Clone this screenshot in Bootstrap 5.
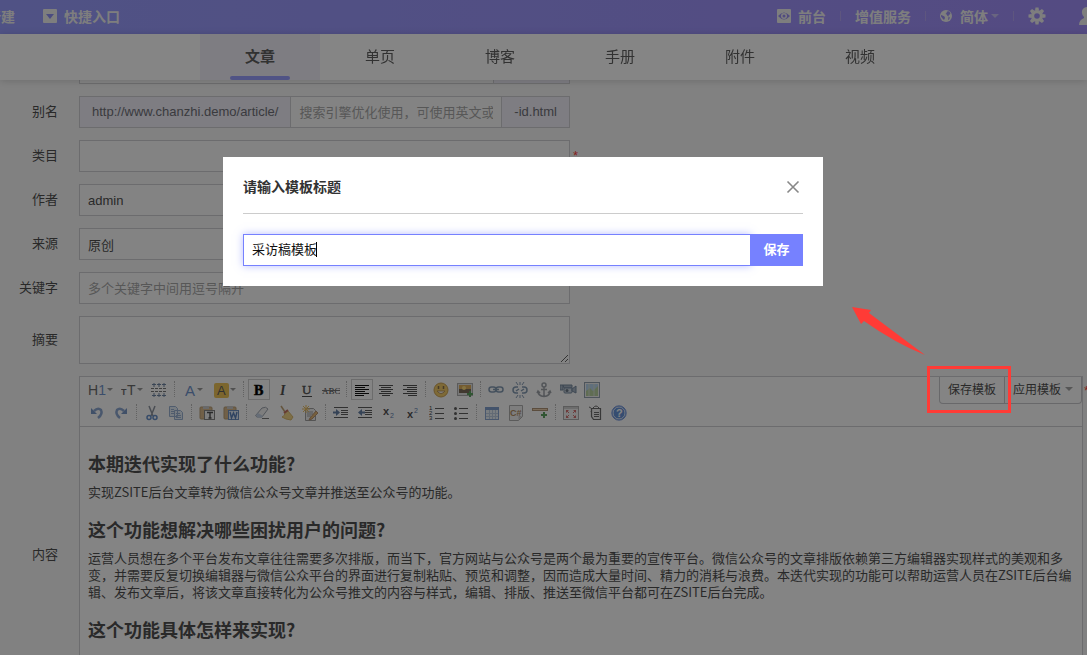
<!DOCTYPE html>
<html lang="zh-CN">
<head>
<meta charset="utf-8">
<meta name="viewport" content="width=device-width, initial-scale=1">
<title>文章</title>
<link href="https://cdn.jsdelivr.net/npm/bootstrap@5.3.0/dist/css/bootstrap.min.css" rel="stylesheet">
<style>
:root{--accent:#7681ff;--line:#d0d0d4}
body{font-family:"Liberation Sans","Noto Sans CJK SC",sans-serif;font-size:13px;line-height:20px;color:#505050;background:#f8f8f8;overflow:hidden}
a{color:inherit;text-decoration:none}
.topbar{height:34px;background:linear-gradient(90deg,#999eff,#a290fa);font:bold 14px/30px "Noto Sans CJK SC",sans-serif;color:#f2f2f2;white-space:nowrap;overflow:hidden;padding-bottom:3px}
.topbar .first-link{margin-left:-13px;margin-right:28px}
.topbar .rule{width:1px;height:10px;background:#b4a6f4;margin:0 14px}
.topbar .gap-icon{margin-right:7px}
.topbar .account{margin-right:-8px;margin-left:33px}
.caret-down{display:inline-block;border:4px solid transparent;border-top-color:currentColor;border-bottom:0}
.topbar .caret-down{margin-left:3px}
.tabs{height:46px;padding-left:200px;background:#fff;box-shadow:0 1px 8px rgba(0,0,0,.16);font:15px/44px "Noto Sans CJK SC",sans-serif}
.tabs .nav-link{width:120px;padding:0;text-align:center;color:#606060;position:relative}
.tabs .active{font-weight:bold;background:#f2f0fa}
.tabs .active::after{content:"";position:absolute;left:30px;right:30px;bottom:0;height:4px;border-radius:3px;background:#9a9fff}
.page{padding:52px 4px 0 0}
.line{display:flex;align-items:center;margin-bottom:12px}
.line>label,.line>.lbl{flex:0 0 58px;margin-right:21px;text-align:right}
.wide{flex:1;min-width:0}
.line>.fieldbox{width:calc((100% - 79px)*.489)}
.form-control,.input-group-text{font-size:13px;line-height:20px;height:32px;padding:5px 8px;border-color:var(--line);border-radius:0;color:#505050;background:#fcfcfc}
.form-control::placeholder{color:#a8a8a8}
.input-group-text{background:#f2f0fa;padding:5px 12px;color:#707078}
.title-side{width:77px}
.fieldbox textarea.form-control{height:48px}
.need{color:#ff4040;margin-left:3px}
.editor{border:1px solid var(--line);background:#fdfdfd;height:358px;position:relative}
.tools{border-bottom:1px solid var(--line);padding:1px 0 3px 5px;height:50px}
.tools .tb{border:1px solid transparent;background:none;width:22px;height:21px;margin:1px;padding:0;display:flex;align-items:center;justify-content:center;color:#3c3c3c}
.tools .on{border-color:#d0d0d0}
.tools .drop{width:29px}
.tools .drop .caret-down{border-width:3px;border-bottom:0;color:#999;margin-left:1px}
.tools .div{width:1px;height:16px;margin:3px;border-left:1px dotted #bcbcbc}
.tools svg,.topbar svg{display:block;flex:none}
.tools svg{opacity:.78}
.tools .on svg{opacity:1}
.tools text{font-family:"Liberation Sans",sans-serif}
.tools .serif{font-family:"Liberation Serif",serif}
.tplbtns{position:absolute;top:0;right:0}
.tplbtns .btn{font-size:12px;line-height:18px;padding:4px 8px;border-color:#c8c8cc;border-top:0;border-radius:0 0 4px 4px;color:#505050;height:27px}
.article{padding:26px 8px;font-family:"Noto Sans CJK SC",sans-serif;line-height:17px}
.article h2{font-size:18px;line-height:20px;font-weight:bold;margin:19px 0 10px}
.article h2:first-child{margin-top:0}
.backdrop{position:fixed;inset:0;background:#000;opacity:.48;z-index:1050}
.asks{padding-right:41px;overflow:hidden}
.asks .modal-dialog{max-width:600px;margin:157px auto 0}
.asks .modal-content{border:0;border-radius:0;padding:0 20px 20px}
.asks .modal-header{height:57px;padding:2px 0 0;border-color:#ccc;border-radius:0}
.asks .modal-title{font:bold 14px/20px "Noto Sans CJK SC",sans-serif;color:#333}
.asks .x{border:0;background:none;padding:2px 0 0;width:20px;height:24px}
.asks .x svg{display:block}
.asks .input-group{padding-top:20px}
.asks .form-control{color:#111;background:#fff;border-color:var(--accent);box-shadow:0 0 8px rgba(118,129,255,.5);padding:3px 8px 7px;caret-color:transparent}
.asks .cursor{position:absolute;left:74px;bottom:9px;width:1px;height:15px;background:#000;z-index:6;pointer-events:none}
.asks .btn{width:53px;padding:0 0 2px;height:32px;border:0;border-radius:0;background:var(--accent);color:#fff;font:bold 13px/28px "Noto Sans CJK SC",sans-serif}
.marks{position:absolute;z-index:1060;pointer-events:none}
.frame{right:76px;top:366px;width:84px;height:47px;border:3px solid #ff3b36}
.arrow{right:161px;top:306px}
.editor-need{position:absolute;right:-7px;top:4px}
</style>
</head>
<body>
<header class="fixed-top">
<nav class="topbar d-flex align-items-center">
  <a href="#" class="first-link">新建</a>
  <a href="#" class="d-flex align-items-center"><svg class="gap-icon" width="14" height="14" viewBox="0 0 14 14"><rect width="14" height="14" rx="1" fill="#f2f2f2"/><path d="M3 5h8L7 10z" fill="#8f91f5"/></svg>快捷入口</a>
  <a href="#" class="d-flex align-items-center ms-auto"><svg class="gap-icon" width="14" height="14" viewBox="0 0 14 14"><rect width="14" height="14" rx="1" fill="#f2f2f2"/><path d="M1 7q6-7 12 0q-6 7-12 0z" fill="#9b91f4"/><circle cx="7" cy="7" r="3" fill="#f2f2f2"/><circle cx="7" cy="7" r="1.500" fill="#9b91f4"/></svg>前台</a>
  <span class="rule"></span><a href="#">增值服务</a><span class="rule"></span>
  <a href="#" class="d-flex align-items-center"><svg class="me-2" width="12" height="12" viewBox="0 0 12 12"><circle cx="6" cy="6" r="6" fill="#f2f2f2"/><path d="M7 1.500l2-.3 1.500 2-1 1.500-1 .2.500 1.500-1.500-.5-.8-1.500-1.200-.4 1-1zM1 5l1.500.5 2 1 .5 1.500-1 2-1.500-1.500-1.500-2zM8.500 7l1.500.5-1 2-1 .5z" fill="#9b91f4"/></svg>简体<i class="caret-down opacity-50"></i></a>
  <span class="rule"></span>
  <a href="#" aria-label="设置"><svg width="18" height="18" viewBox="0 0 18 18"><g fill="#f2f2f2"><circle cx="9" cy="9" r="6"/><g id="t"><path d="M7.500 0.500h3l.5 3H7zM7.500 17.500h3l.5-3H7z"/></g><use href="#t" transform="rotate(45 9 9)"/><use href="#t" transform="rotate(90 9 9)"/><use href="#t" transform="rotate(135 9 9)"/></g><circle cx="9" cy="9" r="2.800" fill="#a090f5"/></svg></a>
  <a href="#" class="account" aria-label="账号"><svg width="16" height="20" viewBox="0 0 16 20"><path d="M8 1a5 5 0 0 1 5 6q0 2-2 4v1q5 2 5 7H0q0-5 5-7v-1Q3 9 3 7a5 5 0 0 1 5-6z" fill="#f2f2f2"/></svg></a>
</nav>
<nav class="tabs nav flex-nowrap"><a class="nav-link active" href="#">文章</a><a class="nav-link" href="#">单页</a><a class="nav-link" href="#">博客</a><a class="nav-link" href="#">手册</a><a class="nav-link" href="#">附件</a><a class="nav-link" href="#">视频</a></nav>
</header>

<form class="page">
  <div class="line"><span class="lbl"></span><div class="fieldbox input-group flex-nowrap"><input class="form-control" aria-label="标题"><span class="input-group-text title-side"></span></div></div>
  <div class="line"><label for="alias">别名</label><div class="fieldbox input-group flex-nowrap"><span class="input-group-text">http://www.chanzhi.demo/article/</span><input id="alias" class="form-control" placeholder="搜索引擎优化使用，可使用英文或数字"><span class="input-group-text">-id.html</span></div></div>
  <div class="line"><label for="cat">类目</label><div class="fieldbox"><input id="cat" class="form-control"></div><span class="need">*</span></div>
  <div class="line"><label for="author">作者</label><div class="fieldbox"><input id="author" class="form-control" value="admin"></div></div>
  <div class="line"><label for="src">来源</label><div class="fieldbox"><input id="src" class="form-control" value="原创"></div></div>
  <div class="line"><label for="kw">关键字</label><div class="fieldbox"><input id="kw" class="form-control" placeholder="多个关键字中间用逗号隔开"></div></div>
  <div class="line"><label for="sum">摘要</label><div class="fieldbox"><textarea id="sum" class="form-control"></textarea></div></div>
  <div class="line"><span class="lbl">内容</span>
   <div class="wide editor">
    <div class="tools">
     <div class="d-flex">
      <button type="button" class="tb drop" aria-label="标题"><svg width="18" height="16"><text x="0" y="13" font-size="14" fill="#444">H<tspan fill="#4a78c0">1</tspan></text></svg><i class="caret-down"></i></button>
      <button type="button" class="tb drop" aria-label="字号"><svg width="16" height="16"><text x="1" y="13" font-size="9" font-weight="bold" fill="#444">T</text><text x="7" y="13" font-size="14" fill="#444">T</text></svg><i class="caret-down"></i></button>
      <button type="button" class="tb" aria-label="行距"><svg width="16" height="16"><path d="M0 6.500h16M0 9.500h16" stroke="#555" stroke-dasharray="3 1"/><path d="M1 2.500h4M6 2.500h4M11 2.500h4M3 1v4M8 1v4M13 1v4M1 13.500h4M6 13.500h4M11 13.500h4M3 11v4M8 11v4M13 11v4" stroke="#49658b"/></svg></button><span class="div"></span>
      <button type="button" class="tb drop" aria-label="文字颜色"><svg width="11" height="16"><text x="0" y="14" font-size="15" fill="#4a78c0">A</text></svg><i class="caret-down"></i></button>
      <button type="button" class="tb drop" aria-label="背景颜色"><svg width="15" height="16"><rect y="1" width="15" height="15" rx="2" fill="#e9b52c"/><text x="3" y="13" font-size="13" fill="#333">A</text></svg><i class="caret-down"></i></button><span class="div"></span>
      <button type="button" class="tb on" aria-label="粗体"><svg width="16" height="16"><text class="serif" x="3" y="13" font-size="14" font-weight="bold" stroke="#111" stroke-width=".6">B</text></svg></button>
      <button type="button" class="tb" aria-label="斜体"><svg width="16" height="16"><text class="serif" x="5" y="13" font-size="14" font-weight="bold" font-style="italic" fill="#222">I</text></svg></button>
      <button type="button" class="tb" aria-label="下划线"><svg width="16" height="16"><text class="serif" x="3" y="12" font-size="13" fill="#222" stroke="#222" stroke-width=".4">U</text><path d="M3 14.500h10" stroke="#222"/></svg></button>
      <button type="button" class="tb" aria-label="删除线"><svg width="18" height="16"><text class="serif" x="0" y="12" font-size="9" fill="#111">ABC</text><path d="M0 8.500h18" stroke="#555"/></svg></button><span class="div"></span>
      <button type="button" class="tb on" aria-label="左对齐"><svg width="16" height="16"><path d="M1 3.500h14M1 5.500h10M1 7.500h14M1 9.500h10M1 11.500h14M1 13.500h9" stroke="#111"/></svg></button>
      <button type="button" class="tb" aria-label="居中"><svg width="16" height="16"><path d="M1 3.500h14M3 5.500h10M1 7.500h14M3 9.500h10M1 11.500h14M4 13.500h8" stroke="#222"/></svg></button>
      <button type="button" class="tb" aria-label="右对齐"><svg width="16" height="16"><path d="M1 3.500h14M5 5.500h10M1 7.500h14M5 9.500h10M1 11.500h14M6 13.500h9" stroke="#222"/></svg></button><span class="div"></span>
      <button type="button" class="tb" aria-label="表情"><svg width="16" height="16"><circle cx="8" cy="8" r="7" fill="#f0bd42" stroke="#c08b25"/><path d="M5.500 4v3M10.500 4v3" stroke="#664a20" stroke-width="1.500"/><path d="M4 9q4 5 8 0z" fill="#fff" stroke="#a87c30"/></svg></button>
      <button type="button" class="tb" aria-label="图片"><svg width="17" height="16"><rect x=".5" y="1.500" width="15" height="12" fill="#ddd" stroke="#999"/><rect x="2" y="3" width="12" height="5" fill="#d79a34"/><rect x="2" y="7" width="12" height="4" fill="#5b4630"/><circle cx="7" cy="6" r="2" fill="#ffd35b"/><path d="M13 9v6M10 12h6" stroke="#328a38" stroke-width="2"/></svg></button><span class="div"></span>
      <button type="button" class="tb" aria-label="链接"><svg width="16" height="16"><g fill="none" stroke="#64809f" stroke-width="1.500"><rect x="1" y="5" width="7" height="5" rx="2.500"/><rect x="8" y="5" width="7" height="5" rx="2.500"/><path d="M5 7.500h6"/></g></svg></button>
      <button type="button" class="tb" aria-label="取消链接"><svg width="16" height="16"><g fill="none" stroke="#64809f" stroke-width="1.500"><path d="M6 5H4a2.500 2.500 0 0 0 0 6h2M10 11h2a2.500 2.500 0 0 0 0-6h-2M4 9l3-2M9 9l3-2"/><path d="M8 0v3M4 0l2 3M12 0l-2 3M8 13v3M4 16l2-3M12 16l-2-3" stroke-width="1"/></g></svg></button>
      <button type="button" class="tb" aria-label="锚点"><svg width="16" height="16"><g fill="none" stroke="#858b94" stroke-width="1.500"><circle cx="8" cy="3" r="2"/><path d="M8 5v10M5 7.500h6M2 9q0 5 6 5.500Q14 14 14 9M1 11l1-2 2 2M12 11l2-2 1 2"/></g></svg></button>
      <button type="button" class="tb" aria-label="视频"><svg width="17" height="16"><path d="M0 3h3v5H0zM3 3h9v3H4z" fill="#8fa0b3" stroke="#526a86"/><rect x="4" y="6" width="8" height="5" rx="1" fill="#c1ccd8" stroke="#526a86"/><path d="M12 7l4-3v7l-4-2z" fill="#8fa0b3" stroke="#526a86"/><circle cx="7" cy="8.500" r="1.500" fill="#456"/></svg></button>
      <button type="button" class="tb" aria-label="地图"><svg width="16" height="16"><rect x=".5" y=".5" width="15" height="15" fill="#eee" stroke="#789"/><path d="M2 2h12v7H2z" fill="#a5cbea"/><path d="M2 9l4-3 3 3 5-5v10H2z" fill="#a7c587"/><path d="M5 2v12M10 2v12" stroke="#ccd8ca"/></svg></button>
     </div>
     <div class="d-flex">
      <button type="button" class="tb" aria-label="撤销"><svg width="16" height="16"><path d="M5 6q4-4 7-1 2 4-3 8" fill="none" stroke="#6d90c5" stroke-width="2.500"/><path d="M2 3v6h6z" fill="#587fba"/></svg></button>
      <button type="button" class="tb" aria-label="重做"><svg width="16" height="16"><path d="M11 6Q7 2 4 5q-2 4 3 8" fill="none" stroke="#6d90c5" stroke-width="2.500"/><path d="M14 3v6H8z" fill="#587fba"/></svg></button><span class="div"></span>
      <button type="button" class="tb" aria-label="剪切"><svg width="16" height="16"><path d="M5 1l4 10M11 1L7 11" stroke="#707987" stroke-width="1.500"/><circle cx="5" cy="12.500" r="2" fill="none" stroke="#3f73bb" stroke-width="1.500"/><circle cx="11" cy="12.500" r="2" fill="none" stroke="#3f73bb" stroke-width="1.500"/></svg></button>
      <button type="button" class="tb" aria-label="复制"><svg width="16" height="16"><g fill="#dbe6f5" stroke="#7d9cc6"><path d="M1.500 1.500h6l2 2v8h-8zM6.500 5.500h6l2 2v7h-8z"/><path d="M3 4.500h3M3 6.500h3M3 8.500h3M8 8.500h4M8 10.500h5M8 12.500h5"/></g></svg></button><span class="div"></span>
      <button type="button" class="tb" aria-label="粘贴文本"><svg width="17" height="16"><rect x="1" y="2" width="12" height="12" rx="1" fill="#d0a76a" stroke="#a58450"/><path d="M4 1h6v3H4z" fill="#bbb"/><rect x="5.500" y="5.500" width="10" height="9" fill="#eee" stroke="#666"/><path d="M8 7.500h6M11 7v6M9.500 13h3" stroke="#222" stroke-width="1.400"/></svg></button>
      <button type="button" class="tb" aria-label="从Word粘贴"><svg width="17" height="16"><rect x="1" y="2" width="12" height="12" rx="1" fill="#d0a76a" stroke="#a58450"/><path d="M4 1h6v3H4z" fill="#bbb"/><rect x="5.500" y="5.500" width="10" height="9" fill="#dce8f8" stroke="#4975b5"/><path d="M7 7l1.500 6 2-5 2 5L14 7" fill="none" stroke="#2d5fa8" stroke-width="1.400"/></svg></button><span class="div"></span>
      <button type="button" class="tb" aria-label="清除格式"><svg width="16" height="16"><path d="M2 10l6-7q4-2 6 1l-6 8H3q-2-1-1-2z" fill="#eee" stroke="#848c99"/><path d="M2 10l2-2 5 3-1 1.500H3z" fill="#b4c5dd"/><path d="M8 13.500h7" stroke="#555"/></svg></button>
      <button type="button" class="tb" aria-label="一键排版"><svg width="16" height="16"><path d="M3 1l4 6" stroke="#b08a50" stroke-width="1.500"/><path d="M7 8l3-2 5 6-2 3-5-1-4-2q3-1 3-4z" fill="#edc965" stroke="#d0a545"/><path d="M6 8l4-3" stroke="#b34c38" stroke-width="2"/></svg></button>
      <button type="button" class="tb" aria-label="草稿"><svg width="17" height="16"><path d="M3.500 3.500h8l2 2v10h-10z" fill="#e9e9e9" stroke="#888"/><path d="M5 7h6M5 9h6M5 11h4" stroke="#888"/><path d="M4 0v8M0 4h8M1 1l6 6M7 1L1 7" stroke="#e4ad38"/><path d="M8 13l6-7 2 2-6 6-3 1z" fill="#dba551" stroke="#a5764a"/></svg></button><span class="div"></span>
      <button type="button" class="tb" aria-label="增加缩进"><svg width="16" height="16"><path d="M1 2.500h14M8 5.500h7M8 7.500h7M8 9.500h7M1 12.500h14" stroke="#333"/><path d="M0 7.500h5" stroke="#3d5d8e" stroke-width="2"/><path d="M3 4l4 3.500L3 11z" fill="#3d5d8e"/></svg></button>
      <button type="button" class="tb" aria-label="减少缩进"><svg width="16" height="16"><path d="M1 2.500h14M8 5.500h7M8 7.500h7M8 9.500h7M1 12.500h14" stroke="#333"/><path d="M3 7.500h5" stroke="#3d5d8e" stroke-width="2"/><path d="M5 4L1 7.500 5 11z" fill="#3d5d8e"/></svg></button>
      <button type="button" class="tb" aria-label="下标"><svg width="16" height="16"><text x="2" y="10" font-size="11" font-weight="bold" fill="#222">x</text><text x="9" y="13" font-size="7" fill="#345f9a">2</text></svg></button>
      <button type="button" class="tb" aria-label="上标"><svg width="16" height="16"><text x="2" y="13" font-size="11" font-weight="bold" fill="#222">x</text><text x="9" y="8" font-size="7" fill="#345f9a">2</text></svg></button>
      <button type="button" class="tb" aria-label="编号"><svg width="16" height="16"><path d="M6 3.500h9M6 8.500h9M6 13.500h9" stroke="#333"/><text x="0" y="5" font-size="6">1</text><text x="0" y="10" font-size="6">2</text><text x="0" y="15" font-size="6">3</text></svg></button>
      <button type="button" class="tb" aria-label="项目符号"><svg width="16" height="16"><path d="M6 3.500h9M6 8.500h9M6 13.500h9" stroke="#333"/><g fill="#333"><circle cx="2.500" cy="3.500" r="1.500"/><circle cx="2.500" cy="8.500" r="1.500"/><circle cx="2.500" cy="13.500" r="1.500"/></g></svg></button><span class="div"></span>
      <button type="button" class="tb" aria-label="表格"><svg width="16" height="16"><rect x="1.500" y="2.500" width="13" height="12" fill="#e4ecf5" stroke="#6d90c5"/><path d="M1 2h14v3H1z" fill="#5d86c0"/><path d="M2 8.500h12M2 11.500h12M5.500 5v9M8.500 5v9M11.500 5v9" stroke="#aec0da"/></svg></button>
      <button type="button" class="tb" aria-label="代码"><svg width="16" height="16"><path d="M1.500.5h13v11l-4 4h-9z" fill="#eee" stroke="#999"/><text x="2" y="11" font-size="9" font-weight="bold" fill="#9d7039">C#</text><path d="M10.500 15v-4H14z" fill="#bbb"/></svg></button>
      <button type="button" class="tb" aria-label="分页"><svg width="17" height="16"><rect x=".5" y="3.500" width="15" height="2" fill="#e6c396" stroke="#9a7854"/><path d="M12 7v6M9 10h6" stroke="#328a38" stroke-width="2"/></svg></button><span class="div"></span>
      <button type="button" class="tb" aria-label="全屏"><svg width="16" height="16"><rect x=".5" y="1.500" width="15" height="13" fill="#f0f0f0" stroke="#999"/><path d="M.5 3h15" stroke="#999"/><path d="M3 5h3L3 8zM13 5h-3l3 3zM3 13h3l-3-3zM13 13h-3l3-3z" fill="#c94b4b"/><path d="M3 5l3 3M13 5l-3 3M3 13l3-3M13 13l-3-3" stroke="#c94b4b"/></svg></button>
      <button type="button" class="tb" aria-label="源代码"><svg width="16" height="16"><path d="M4.500 3.500h9v11h-7l-2-3z" fill="#eee" stroke="#444" stroke-width="1.200"/><path d="M6 3q3-4 6 0M7 7.500h5M7 9.500h5M7 11.500h5M2 2q4 1 2 5" fill="none" stroke="#444"/></svg></button>
      <button type="button" class="tb" aria-label="帮助"><svg width="16" height="16"><circle cx="8" cy="8" r="7" fill="#3f79d0"/><circle cx="8" cy="8" r="6" fill="none" stroke="#dae5f5"/><circle cx="8" cy="8" r="7.200" fill="none" stroke="#517bd5"/><text x="5" y="12" font-size="11" font-weight="bold" fill="#fff">?</text></svg></button>
     </div>
    </div>
    <div class="tplbtns btn-group"><button type="button" class="btn">保存模板</button><button type="button" class="btn">应用模板<i class="caret-down ms-1 mb-1 align-middle opacity-50"></i></button></div>
    <span class="need editor-need">*</span>
    <div class="article">
     <h2>本期迭代实现了什么功能?</h2><p class="m-0">实现ZSITE后台文章转为微信公众号文章并推送至公众号的功能。</p>
     <h2>这个功能想解决哪些困扰用户的问题?</h2><p class="m-0">运营人员想在多个平台发布文章往往需要多次排版，而当下，官方网站与公众号是两个最为重要的宣传平台。微信公众号的文章排版依赖第三方编辑器实现样式的美观和多变，并需要反复切换编辑器与微信公众平台的界面进行复制粘贴、预览和调整，因而造成大量时间、精力的消耗与浪费。本迭代实现的功能可以帮助运营人员在ZSITE后台编辑、发布文章后，将该文章直接转化为公众号推文的内容与样式，编辑、排版、推送至微信平台都可在ZSITE后台完成。</p>
     <h2>这个功能具体怎样来实现?</h2>
    </div>
   </div>
  </div>
</form>
<div class="backdrop"></div>
<div class="modal asks d-block" role="dialog" aria-labelledby="mt"><div class="modal-dialog"><div class="modal-content">
  <div class="modal-header"><h4 class="modal-title" id="mt">请输入模板标题</h4><button type="button" class="x" aria-label="关闭"><svg width="20" height="20" viewBox="0 0 20 20"><path d="M4.500 4.500l11 11M15.500 4.500l-11 11" stroke="#888" stroke-width="1.600"/></svg></button></div>
  <div class="input-group flex-nowrap"><input id="tplTitle" class="form-control" aria-label="模板标题" value="采访稿模板"><button type="button" class="btn">保存</button><span class="cursor"></span></div>
</div></div></div>
<div class="marks frame"></div>
<svg class="marks arrow" width="74" height="52" viewBox="0 0 74 52"><path d="M0 1l19 3-2 3 56 42q-30-12-61-34l-3 3z" fill="#ff3b36"/></svg>
<script src="https://cdn.jsdelivr.net/npm/bootstrap@5.3.0/dist/js/bootstrap.bundle.min.js"></script>
</body>
</html>
